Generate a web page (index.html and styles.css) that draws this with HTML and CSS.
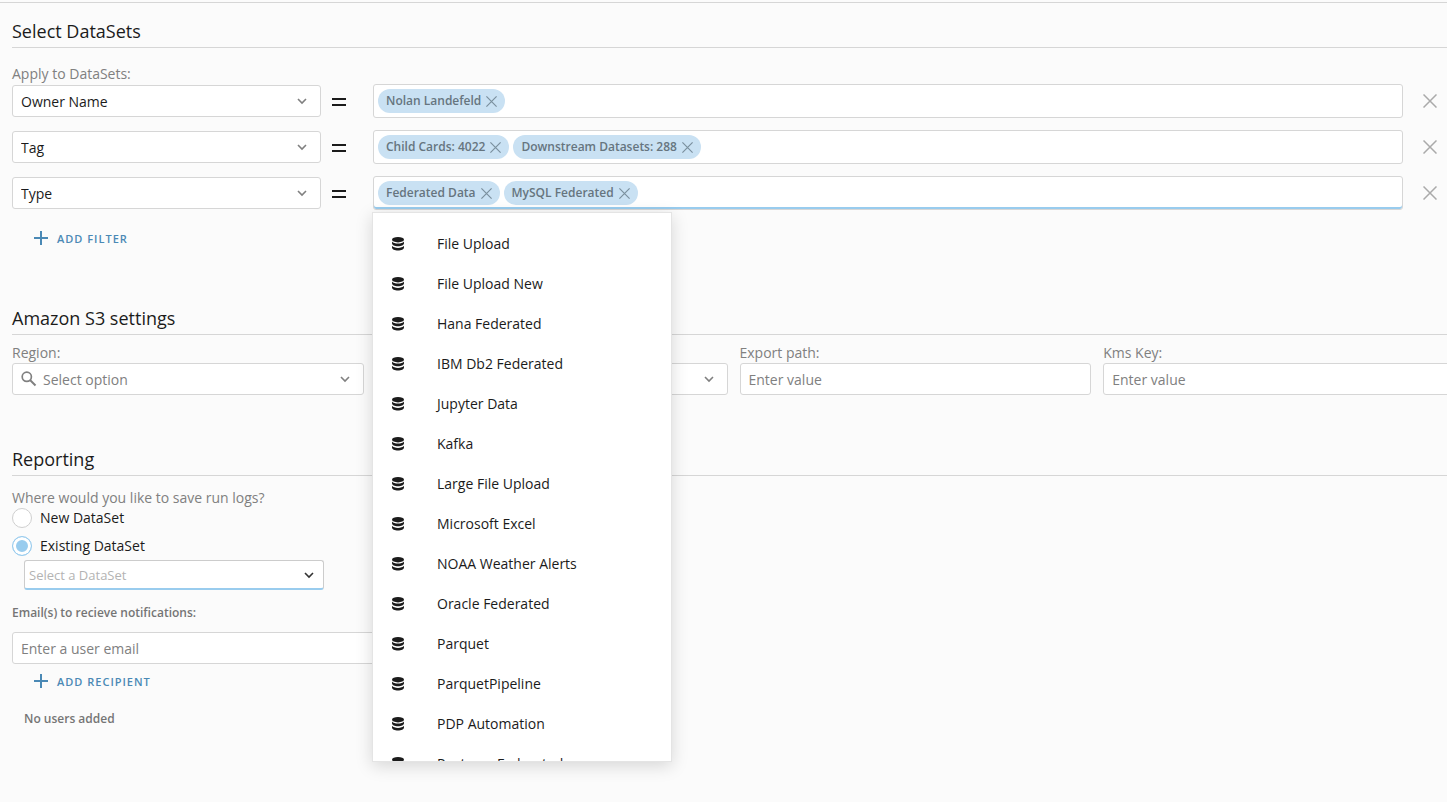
FILE: index.html
```html
<!DOCTYPE html>
<html lang="en">
<head>
  <meta charset="UTF-8">
  <meta name="viewport" content="width=device-width, initial-scale=1.0">
  <title>Select DataSets</title>
  <link rel="stylesheet" href="styles.css">
</head>
<body>

<!-- Shared icons -->
<svg class="sprite" aria-hidden="true">
  <symbol id="chevron" viewBox="0 0 10 10"><path d="M1 3l4 4 4-4" fill="none" stroke="currentColor" stroke-width="1.6"/></symbol>
  <symbol id="cross" viewBox="0 0 14 14"><path d="M.5.5l13 13M13.5.5l-13 13" fill="none" stroke="currentColor" stroke-width="1.5"/></symbol>
  <symbol id="equals" viewBox="0 0 14 8"><path d="M0 0h14v2H0zM0 6h14v2H0z" fill="currentColor"/></symbol>
  <symbol id="plus" viewBox="0 0 14 14"><path d="M6 0h2v6h6v2H8v6H6V8H0V6h6z" fill="currentColor"/></symbol>
  <symbol id="search" viewBox="0 0 16 16"><circle cx="5.8" cy="5.8" r="4.6" fill="none" stroke="currentColor" stroke-width="1.7"/><path d="M9 9l5.500 5.500" fill="none" stroke="currentColor" stroke-width="2"/></symbol>
  <symbol id="database" viewBox="0 0 12 14"><ellipse cx="6" cy="2.7" rx="6" ry="2.7" fill="currentColor"/><path d="M0 4.500c1 1.500 3.400 2.100 6 2.100s5-.6 6-2.100v1.700c0 1.700-2.700 3-6 3s-6-1.300-6-3zM0 8.800c1 1.500 3.400 2.100 6 2.100s5-.6 6-2.100v1.700c0 1.700-2.700 3-6 3s-6-1.300-6-3z" fill="currentColor"/></symbol>
</svg>

<main class="page">

  <section class="datasets">
    <h2>Select DataSets</h2>
    <p class="label">Apply to DataSets:</p>

    <div class="filters">
      <div class="filter">
        <div class="select">
          <select aria-label="Filter field"><option>Owner Name</option><option>Tag</option><option>Type</option></select>
          <svg class="chevron"><use href="#chevron"/></svg>
        </div>
        <svg class="equals"><use href="#equals"/></svg>
        <div class="tags">
          <span class="tag">Nolan Landefeld <button type="button" aria-label="Remove Nolan Landefeld"><svg><use href="#cross"/></svg></button></span>
          <input type="text" aria-label="Owner Name">
        </div>
        <button type="button" class="remove" aria-label="Remove filter"><svg><use href="#cross"/></svg></button>
      </div>

      <div class="filter">
        <div class="select">
          <select aria-label="Filter field"><option>Tag</option><option>Owner Name</option><option>Type</option></select>
          <svg class="chevron"><use href="#chevron"/></svg>
        </div>
        <svg class="equals"><use href="#equals"/></svg>
        <div class="tags">
          <span class="tag">Child Cards: 4022 <button type="button" aria-label="Remove Child Cards"><svg><use href="#cross"/></svg></button></span>
          <span class="tag">Downstream Datasets: 288 <button type="button" aria-label="Remove Downstream Datasets"><svg><use href="#cross"/></svg></button></span>
          <input type="text" aria-label="Tag">
        </div>
        <button type="button" class="remove" aria-label="Remove filter"><svg><use href="#cross"/></svg></button>
      </div>

      <div class="filter">
        <div class="select">
          <select aria-label="Filter field"><option>Type</option><option>Owner Name</option><option>Tag</option></select>
          <svg class="chevron"><use href="#chevron"/></svg>
        </div>
        <svg class="equals"><use href="#equals"/></svg>
        <div class="tags active">
          <span class="tag">Federated Data <button type="button" aria-label="Remove Federated Data"><svg><use href="#cross"/></svg></button></span>
          <span class="tag">MySQL Federated <button type="button" aria-label="Remove MySQL Federated"><svg><use href="#cross"/></svg></button></span>
          <input type="text" aria-label="Type">
          <ul class="menu" role="listbox" aria-label="Types">
            <li role="option"><svg><use href="#database"/></svg>File Upload</li>
            <li role="option"><svg><use href="#database"/></svg>File Upload New</li>
            <li role="option"><svg><use href="#database"/></svg>Hana Federated</li>
            <li role="option"><svg><use href="#database"/></svg>IBM Db2 Federated</li>
            <li role="option"><svg><use href="#database"/></svg>Jupyter Data</li>
            <li role="option"><svg><use href="#database"/></svg>Kafka</li>
            <li role="option"><svg><use href="#database"/></svg>Large File Upload</li>
            <li role="option"><svg><use href="#database"/></svg>Microsoft Excel</li>
            <li role="option"><svg><use href="#database"/></svg>NOAA Weather Alerts</li>
            <li role="option"><svg><use href="#database"/></svg>Oracle Federated</li>
            <li role="option"><svg><use href="#database"/></svg>Parquet</li>
            <li role="option"><svg><use href="#database"/></svg>ParquetPipeline</li>
            <li role="option"><svg><use href="#database"/></svg>PDP Automation</li>
            <li role="option"><svg><use href="#database"/></svg>Postgres Federated</li>
          </ul>
        </div>
        <button type="button" class="remove" aria-label="Remove filter"><svg><use href="#cross"/></svg></button>
      </div>
    </div>

    <button type="button" class="add"><svg><use href="#plus"/></svg>Add filter</button>
  </section>

  <section class="s3">
    <h2>Amazon S3 settings</h2>
    <div class="fields">
      <div class="field">
        <label class="label" for="region">Region:</label>
        <div class="select search">
          <svg class="search-icon"><use href="#search"/></svg>
          <select id="region"><option>Select option</option></select>
          <svg class="chevron"><use href="#chevron"/></svg>
        </div>
      </div>
      <div class="field">
        <div class="select search">
          <select aria-label="S3 option"><option></option></select>
          <svg class="chevron"><use href="#chevron"/></svg>
        </div>
      </div>
      <div class="field">
        <label class="label" for="path">Export path:</label>
        <input type="text" class="text" id="path" placeholder="Enter value">
      </div>
      <div class="field">
        <label class="label" for="kms">Kms Key:</label>
        <input type="text" class="text" id="kms" placeholder="Enter value">
      </div>
    </div>
  </section>

  <section class="reporting">
    <h2>Reporting</h2>
    <p class="label">Where would you like to save run logs?</p>
    <div class="radios">
      <label><input type="radio" name="logs">New DataSet</label>
      <label><input type="radio" name="logs" checked>Existing DataSet</label>
    </div>
    <div class="select dataset">
      <select aria-label="DataSet"><option>Select a DataSet</option></select>
      <svg class="chevron"><use href="#chevron"/></svg>
    </div>

    <label class="email-label" for="email">Email(s) to recieve notifications:</label>
    <input type="email" class="text email" id="email" placeholder="Enter a user email">
    <button type="button" class="add"><svg><use href="#plus"/></svg>Add recipient</button>
    <p class="empty">No users added</p>
  </section>

</main>

</body>
</html>
```
FILE: styles.css
```css
* {
  box-sizing: border-box;
}

body {
  min-height: 100vh;
  margin: 0;
  padding-top: 2px;
  overflow-x: hidden;
  background-color: #fbfbfb;
  color: #1b1b1b;
  font-family: "Open Sans", sans-serif;
  font-size: 14px;
  line-height: 20px;
}

h2, p, ul {
  margin: 0;
  padding: 0;
}

input, select, button {
  margin: 0;
  font-family: inherit;
  font-size: 14px;
  color: inherit;
}

button {
  padding: 0;
  border: none;
  background: none;
  cursor: pointer;
}

svg {
  display: block;
  flex: none;
}

.sprite {
  display: none;
}

.page {
  padding-left: 12px;
  border-top: 1px solid #d6d6d6;
}

h2 {
  height: 45px;
  padding-top: 16px;
  border-bottom: 1px solid #d6d6d6;
  font-size: 18px;
  font-weight: 400;
  line-height: 24px;
}

.label {
  display: block;
  color: #808080;
}

.select {
  position: relative;
}

select, .text {
  display: block;
  width: 100%;
  height: 32px;
  padding: 0 8px;
  border: 1px solid #d6d6d6;
  border-radius: 3px;
  background-color: #fff;
  appearance: none;
  outline: none;
}

.text::placeholder {
  color: #808080;
  opacity: 1;
}

.chevron {
  position: absolute;
  top: 11px;
  right: 14px;
  width: 10px;
  height: 10px;
  color: #808080;
  pointer-events: none;
}

/* Filters */
.datasets > .label {
  margin-top: 16px;
}

.filters {
  display: flex;
  flex-direction: column;
  gap: 12px;
}

.filter {
  display: grid;
  grid-template-columns: 309px 52px 1fr 44px;
  align-items: center;
}

.equals {
  width: 14px;
  height: 8px;
  margin: 2px 0 0 11px;
}

.tags {
  position: relative;
  display: flex;
  align-items: center;
  gap: 4px;
  height: 34px;
  padding: 0 4px;
  border: 1px solid #d6d6d6;
  border-radius: 3px;
  background-color: #fff;
}

.tags.active {
  box-shadow: inset 0 -2px #99ccee;
}

.tags input {
  flex: 1;
  min-width: 0;
  border: none;
  outline: none;
  background: none;
}

.tag {
  display: flex;
  align-items: center;
  gap: 5px;
  height: 24px;
  padding: 0 8px;
  border-radius: 12px;
  background-color: #c9e1f3;
  color: #66757f;
  font-size: 12px;
  font-weight: 600;
  white-space: nowrap;
}

.tag svg {
  width: 11px;
  height: 11px;
  color: #7b909e;
}

.remove {
  justify-self: end;
  margin-right: 10px;
  color: #aaa;
}

.remove svg {
  width: 14px;
  height: 14px;
}

.menu {
  position: absolute;
  top: 35px;
  left: -2px;
  z-index: 10;
  width: 300px;
  height: 550px;
  padding-top: 11px;
  border: 1px solid #e4e4e4;
  background-color: #fff;
  box-shadow: 0 4px 16px rgba(0, 0, 0, 0.15);
  overflow-y: auto;
  scrollbar-width: none;
  list-style: none;
}

.menu li {
  display: flex;
  align-items: center;
  gap: 33px;
  height: 40px;
  padding-left: 19px;
}

.menu svg {
  width: 12px;
  height: 14px;
}

.add {
  display: flex;
  align-items: center;
  gap: 9px;
  height: 20px;
  margin-left: 22px;
  color: #4a89b5;
  font-size: 11px;
  font-weight: 600;
  letter-spacing: 1px;
  text-transform: uppercase;
}

.add svg {
  width: 14px;
  height: 14px;
}

.datasets .add {
  margin-top: 18px;
}

/* S3 */
.s3 {
  margin-top: 42px;
}

.fields {
  display: grid;
  grid-template-columns: repeat(4, 1fr);
  align-items: end;
  gap: 12px;
  margin-top: 8px;
  margin-right: -8px;
}

.search select {
  padding-left: 30px;
  color: #808080;
}

.search-icon {
  position: absolute;
  top: 8px;
  left: 9px;
  width: 16px;
  height: 16px;
  color: #808080;
}

/* Reporting */
.reporting {
  margin-top: 36px;
}

.reporting > .label {
  margin-top: 12px;
}

.radios {
  display: flex;
  flex-direction: column;
  align-items: flex-start;
  gap: 8px;
}

.radios label {
  display: flex;
  align-items: center;
  gap: 8px;
}

.radios input {
  width: 20px;
  height: 20px;
  border: 1px solid #cfcfcf;
  border-radius: 50%;
  background-color: #fff;
  appearance: none;
}

.radios input:checked {
  border-color: #99ccee;
  background-color: #99ccee;
  box-shadow: inset 0 0 0 3px #fff;
}

.dataset {
  width: 300px;
  margin: 4px 0 0 12px;
}

.dataset select {
  height: 30px;
  padding: 0 4px;
  border-color: #ccc;
  border-bottom: 2px solid #99ccee;
  color: #b3b3b3;
  font-size: 13px;
}

.dataset .chevron {
  top: 10px;
  right: 10px;
  color: #333;
}

.email-label {
  display: block;
  margin-top: 13px;
  color: #757575;
  font-size: 12px;
  font-weight: 600;
}

.email {
  width: 600px;
  max-width: 100%;
  margin-top: 9px;
}

.reporting .add {
  margin-top: 7px;
}

.empty {
  margin: 18px 0 0 12px;
  color: #757575;
  font-size: 12px;
  font-weight: 600;
}
```
